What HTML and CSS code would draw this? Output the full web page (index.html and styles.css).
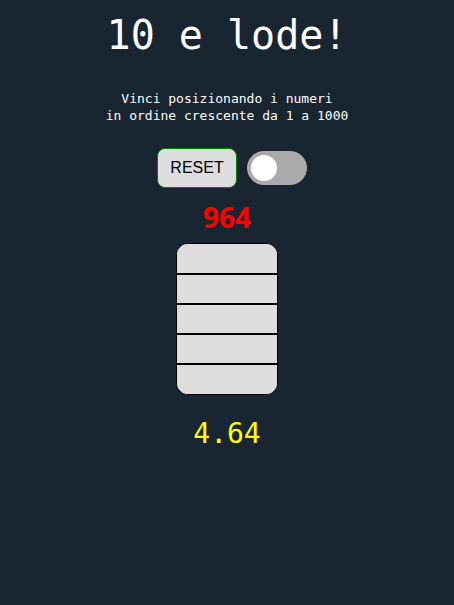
FILE: index.html
```html
<!DOCTYPE html>
<html lang="it">
<head>
<meta charset="utf-8">
<meta name="viewport" content="width=device-width, initial-scale=1">
<title>10 e lode!</title>
<link rel="stylesheet" href="styles.css">
</head>
<body>
<main class="game">
  <h1 class="title">10 e lode!</h1>
  <p class="intro">Vinci posizionando i numeri<br>in ordine crescente da 1 a 1000</p>
  <div class="controls">
    <button class="reset" type="button">RESET</button>
    <input class="switch" type="checkbox" aria-label="Modalità">
  </div>
  <output class="number">964</output>
  <div class="slots">
    <button class="slot" type="button" aria-label="Posizione 1"></button>
    <button class="slot" type="button" aria-label="Posizione 2"></button>
    <button class="slot" type="button" aria-label="Posizione 3"></button>
    <button class="slot" type="button" aria-label="Posizione 4"></button>
    <button class="slot" type="button" aria-label="Posizione 5"></button>
  </div>
  <output class="score">4.64</output>
</main>
</body>
</html>
```
FILE: styles.css
```css
* {
  box-sizing: border-box;
}

body {
  margin: 0;
  background: #192531;
  color: #fff;
  font-family: Consolas, "DejaVu Sans Mono", monospace;
}

.game {
  display: flex;
  flex-direction: column;
  align-items: center;
  padding: 8px;
  text-align: center;
}

.title {
  margin: 0;
  font-size: 40px;
  font-weight: 400;
  line-height: 54px;
}

.intro {
  margin: 28px 0 24px;
  font-size: 13px;
  line-height: 17px;
}

.controls {
  display: flex;
  align-items: center;
  gap: 10px;
  padding-left: 10px;
}

.reset {
  width: 80px;
  height: 40px;
  padding: 0;
  border: 1px solid #008000;
  border-radius: 8px;
  background: #ddd;
  color: #000;
  font: 16px "Liberation Sans", Arial, sans-serif;
}

.switch {
  display: flex;
  appearance: none;
  width: 60px;
  height: 34px;
  margin: 0;
  padding: 4px;
  border-radius: 17px;
  background: #aaa;
}

.switch::before {
  content: "";
  width: 26px;
  height: 26px;
  border-radius: 50%;
  background: #fff;
}

.switch:checked {
  justify-content: flex-end;
  background: #008000;
}

.number {
  margin: 13px 0 10px;
  color: #f00;
  font-family: "Open Sans", "Noto Sans", sans-serif;
  font-size: 28px;
  font-weight: 700;
  line-height: 32px;
}

.slots {
  display: flex;
  flex-direction: column;
  width: 102px;
  overflow: hidden;
  border: 1px solid #000;
  border-radius: 12px;
  background: #ddd;
}

.slot {
  height: 30px;
  padding: 0;
  border: 0 solid #000;
  background: #ddd;
}

.slot:not(:first-child) {
  border-top-width: 1px;
}

.slot:not(:last-child) {
  border-bottom-width: 1px;
}

.score {
  margin-top: 23px;
  color: #ff0;
  font-size: 28px;
  line-height: 32px;
}
```
